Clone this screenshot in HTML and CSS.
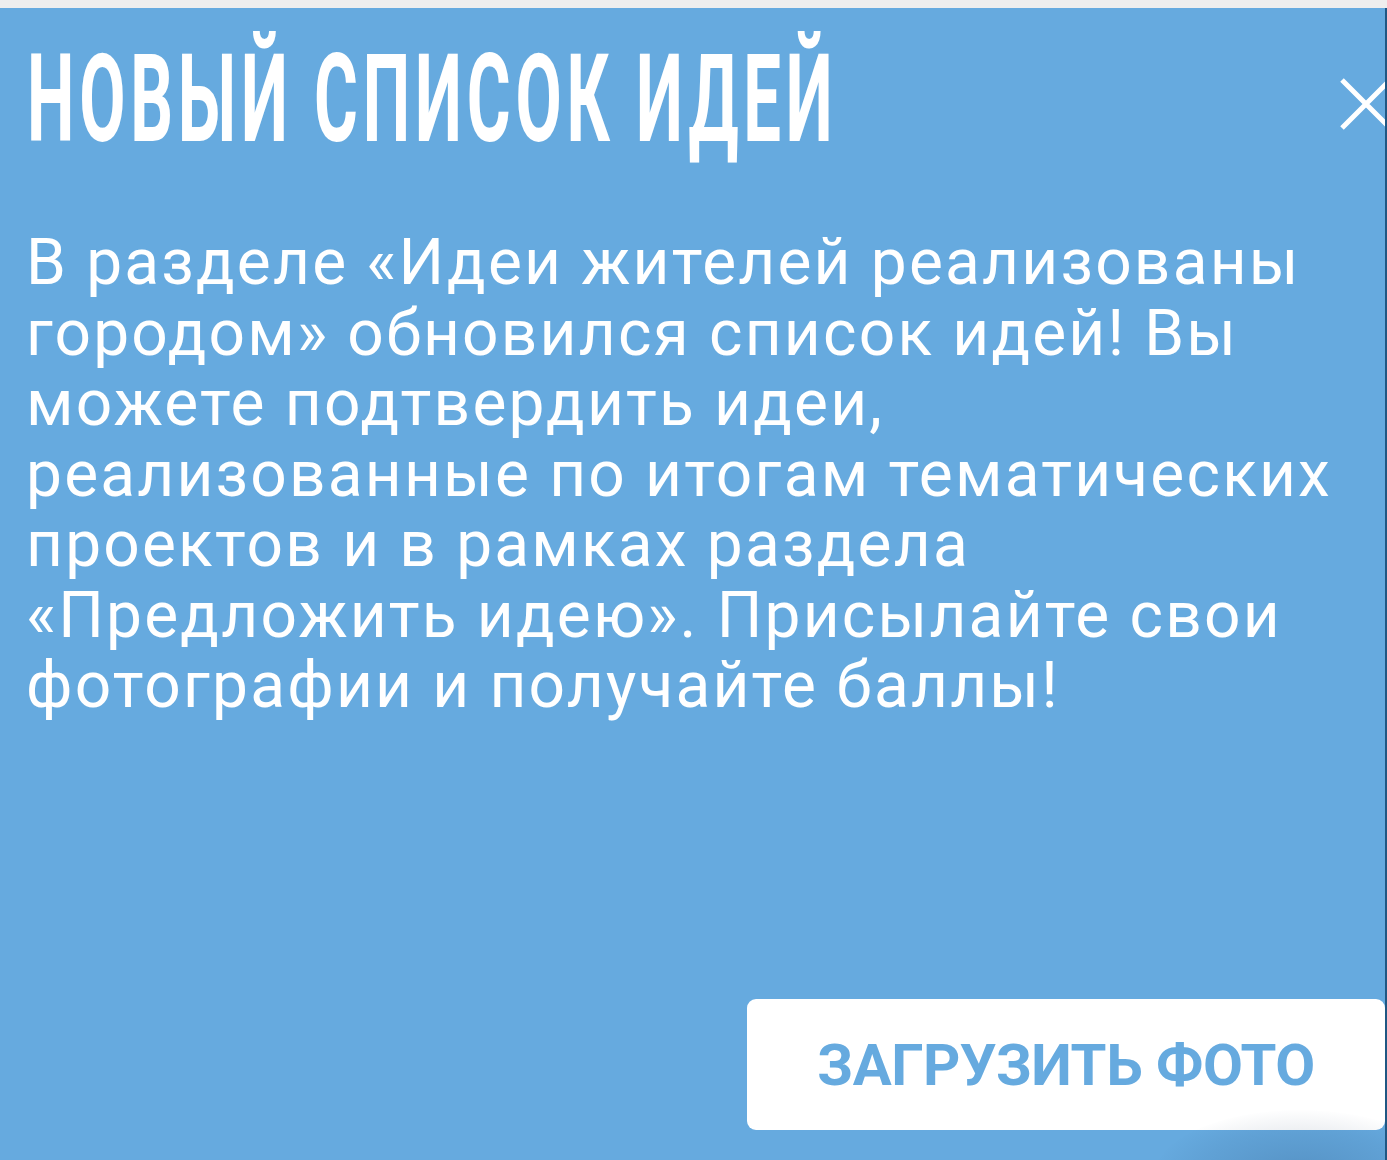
FILE: index.html
```html
<!DOCTYPE html>
<html lang="ru">
<head>
<meta charset="utf-8">
<title>Новый список идей</title>
<link rel="stylesheet" href="styles.css">
</head>
<body>
<div class="topbar"></div>
<main class="panel">
  <header class="panel-head">
    <h1 class="title"><span class="title-text">НОВЫЙ СПИСОК ИДЕЙ</span></h1>
    <button class="close" aria-label="Закрыть">
      <svg viewBox="0 0 54 54" width="54" height="54"><path d="M3 3 L51 51 M51 3 L3 51" stroke="#fff" stroke-width="5" stroke-linecap="butt" fill="none"/></svg>
    </button>
  </header>
  <p class="text">В разделе «Идеи жителей реализованы<br>городом» обновился список идей! Вы<br>можете подтвердить идеи,<br>реализованные по итогам тематических<br>проектов и в рамках раздела<br>«Предложить идею». Присылайте свои<br>фотографии и получайте баллы!</p>
  <div class="actions">
    <button class="upload">ЗАГРУЗИТЬ ФОТО</button>
  </div>
</main>
</body>
</html>
```

FILE: styles.css
```css
html, body {
  margin: 0;
  padding: 0;
  height: 100%;
}

body {
  background: #eeeeee;
  overflow: hidden;
  display: flex;
  flex-direction: column;
  font-family: Roboto, "Noto Sans", sans-serif;
}

.topbar {
  height: 8px;
  flex: 0 0 8px;
  background: #eeeeee;
}

.panel {
  position: relative;
  flex: 1;
  background: #66aadf;
  border-right: 2px solid #1f5783;
  overflow: hidden;
  display: flex;
  flex-direction: column;
  padding: 31px 0 30px 0;
}

.panel::after {
  content: "";
  position: absolute;
  right: -60px;
  bottom: -80px;
  width: 290px;
  height: 130px;
  border-radius: 50%;
  background: radial-gradient(ellipse at center, rgba(20, 50, 90, 0.2) 0%, rgba(20, 50, 90, 0.07) 50%, rgba(20, 50, 90, 0) 72%);
  pointer-events: none;
}

.panel-head {
  position: relative;
  padding-left: 27px;
}

.title {
  margin: 0;
  font-family: Roboto, "Noto Sans", sans-serif;
  font-weight: 700;
  font-size: 122px;
  line-height: 1;
  color: #ffffff;
  white-space: nowrap;
}

.title-text {
  display: inline-block;
  transform: scaleX(0.55);
  transform-origin: left center;
  letter-spacing: 8.7px;
}

.close {
  position: absolute;
  top: 38px;
  right: -8px;
  width: 54px;
  height: 54px;
  padding: 0;
  border: 0;
  background: transparent;
  cursor: pointer;
}

.close svg {
  display: block;
}

.text {
  margin: 67px 0 0 0;
  padding-left: 26px;
  font-family: Roboto, "Noto Sans", sans-serif;
  font-weight: 400;
  font-size: 64px;
  line-height: 70.5px;
  letter-spacing: 2.2px;
  color: #ffffff;
  white-space: nowrap;
}

.actions {
  margin-top: auto;
  display: flex;
  justify-content: flex-end;
}

.upload {
  width: 638px;
  height: 131px;
  border: 0;
  border-radius: 9px;
  background: #ffffff;
  color: #66aadf;
  font-family: Roboto, "Noto Sans", sans-serif;
  font-weight: 700;
  font-size: 58px;
  letter-spacing: -0.5px;
  cursor: pointer;
}
```
